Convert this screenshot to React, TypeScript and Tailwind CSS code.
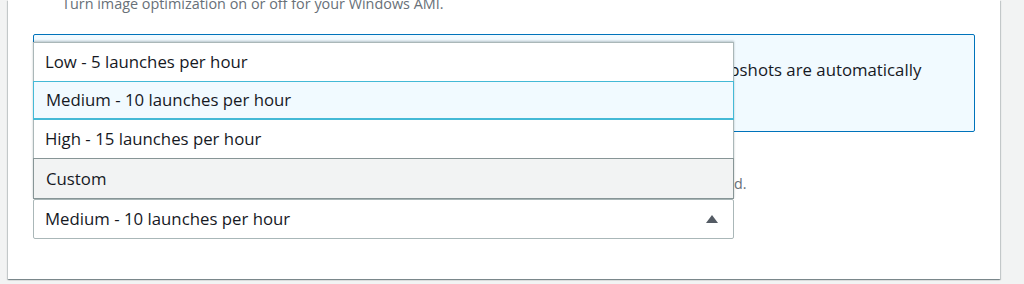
import React from 'react';

const options = [
  { label: 'Low - 5 launches per hour', state: 'idle' },
  { label: 'Medium - 10 launches per hour', state: 'selected' },
  { label: 'High - 15 launches per hour', state: 'idle' },
  { label: 'Custom', state: 'hover' },
];

function Caret() {
  return (
    <svg width="14" height="10" viewBox="0 0 14 10" className="text-[#545b64]">
      <path d="M7 1 L13 9 L1 9 Z" fill="currentColor" />
    </svg>
  );
}

export default function App() {
  return (
    <div
      className="w-full h-[284px] overflow-hidden bg-[#f2f3f3] pl-2 pr-6"
      style={{ fontFamily: '"Open Sans", "Noto Sans", sans-serif' }}
    >
      <div className="relative flow-root h-[279px] bg-white shadow-[0_1px_1px_0_rgba(0,28,36,0.3),1px_1px_1px_0_rgba(0,28,36,0.15),-1px_1px_1px_0_rgba(0,28,36,0.15)] pl-[25px] pr-[25px]">
        {/* toggle description, cut off at the top */}
        <p className="pl-[29px] -mt-[6px] text-[14.4px] leading-[20px] text-[#687078]">
          Turn image optimization on or off for your Windows AMI.
        </p>

        {/* info alert */}
        <div className="mt-[20px] h-[98px] w-[942px] rounded-[2px] border border-[#0073bb] bg-[#f1faff] px-[12px] pt-[22px] text-[16.8px] leading-[26px] text-[#16191f]">
          New instances launch much faster from this Windows AMI because pre-provisioned snapshots are automatically
          <br />
          created and replenished in the background.
        </div>

        {/* launch frequency */}
        <p className="mt-[42px] text-[14.28px] leading-[20px] text-[#687078]">
          Specify the maximum number of parallel instances to launch at the same time when snapshots are created.
        </p>
        <div className="mt-[5px] flex h-[40px] w-[701px] items-center justify-between rounded-[2px] border border-[#aab7b8] bg-white pl-[11px] pr-[14px] text-[16.8px] text-[#16191f]">
          <span>Medium - 10 launches per hour</span>
          <Caret />
        </div>

        {/* open dropdown list, above the select */}
        <ul className="absolute left-[25px] top-[42px] w-[701px] border border-[#aab7b8] border-b-0 bg-white shadow-[0_-1px_2px_0_rgba(0,28,36,0.25)] text-[16.8px] text-[#16191f]">
          {options.map((o) => (
            <li
              key={o.label}
              className={
                o.state === 'selected'
                  ? '-mx-px flex h-[39px] items-center border border-[#44b9d6] border-b-2 bg-[#f1faff] pl-[12px]'
                  : o.state === 'hover'
                  ? '-mx-px flex h-[41px] items-center border border-[#879596] bg-[#f2f3f3] pl-[12px]'
                  : 'flex h-[38px] items-center pl-[11px]'
              }
            >
              {o.label}
            </li>
          ))}
        </ul>
      </div>
    </div>
  );
}
